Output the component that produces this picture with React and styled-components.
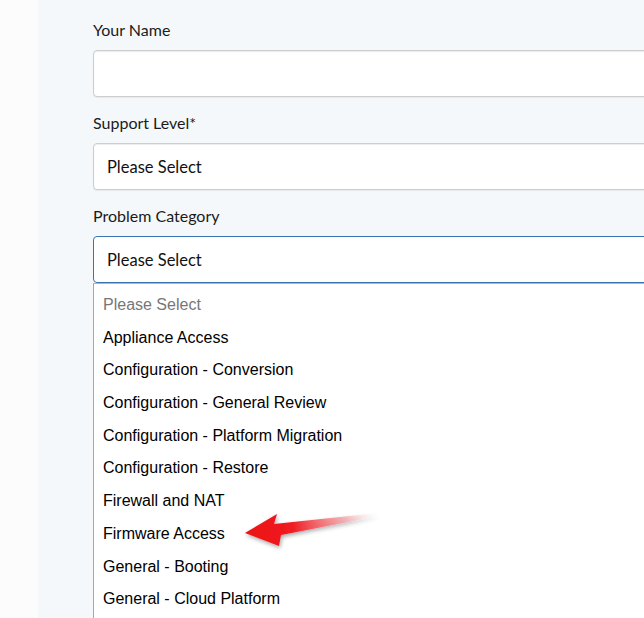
import React from 'react'
import styled, { createGlobalStyle } from 'styled-components'

const GlobalStyle = createGlobalStyle`
  html, body {
    margin: 0;
    padding: 0;
    background: #fcfcfd;
  }
  body {
    font-family: Lato, "Noto Sans", sans-serif;
    overflow: hidden;
  }
`;

const Page = styled.div`
  position: relative;
  width: 644px;
  height: 618px;
  overflow: hidden;
  display: flex;
`;

const Gutter = styled.div`
  width: 38px;
  flex: none;
  background: #fcfcfd;
`;

const Panel = styled.div`
  flex: 1;
  background: #f5f8fb;
  padding: 18px 0 0 55px;
`;

const Field = styled.div`
  display: flex;
  flex-direction: column;
  margin-bottom: 14px;
`;

const Label = styled.label`
  font-size: 16px;
  line-height: 24px;
  height: 24px;
  color: #1b1b1b;
  margin-bottom: 8px;
`;

const Box = styled.div`
  box-sizing: border-box;
  height: 47px;
  width: 600px;
  background: #fff;
  border: 1px solid ${p => (p.$focused ? '#3a73b3' : '#cdcdcd')};
  border-radius: 4px;
  box-shadow: ${p => (p.$focused ? 'none' : 'inset 0 1px 1px rgba(0,0,0,0.08), 0 1px 1px rgba(0,0,0,0.06)')};
  display: flex;
  align-items: center;
  padding-left: 13px;
  font-size: 16.5px;
  color: #111;
`;

const Dropdown = styled.ul`
  list-style: none;
  margin: -14px 0 0 0;
  padding: 5px 0 0 0;
  width: 600px;
  box-sizing: border-box;
  background: #fff;
  border-left: 1px solid #a7a7a7;
  border-top: 1px solid #b5b5b5;
  height: 400px;
`;

const Option = styled.li`
  font-family: "Liberation Sans", Arial, sans-serif;
  font-size: 16px;
  height: 32.7px;
  line-height: 32.7px;
  padding-left: 9px;
  color: ${p => (p.$placeholder ? '#777' : '#000')};
`;

const Arrow = styled.svg`
  position: absolute;
  left: 230px;
  top: 500px;
  overflow: visible;
`;

const options = [
  'Appliance Access',
  'Configuration - Conversion',
  'Configuration - General Review',
  'Configuration - Platform Migration',
  'Configuration - Restore',
  'Firewall and NAT',
  'Firmware Access',
  'General - Booting',
  'General - Cloud Platform',
];

const App = () => {
  return (
    <Page>
      <GlobalStyle />
      <Gutter />
      <Panel>
        <Field>
          <Label>Your Name</Label>
          <Box />
        </Field>
        <Field>
          <Label>Support Level*</Label>
          <Box>Please Select</Box>
        </Field>
        <Field>
          <Label>Problem Category</Label>
          <Box $focused>Please Select</Box>
        </Field>
        <Dropdown>
          <Option $placeholder>Please Select</Option>
          {options.map((o, i) => (
            <Option key={i}>{o}</Option>
          ))}
        </Dropdown>
      </Panel>
      <Arrow width="160" height="60" viewBox="0 0 160 60">
        <defs>
          <linearGradient id="shaft" x1="0" y1="0" x2="1" y2="0">
            <stop offset="0" stopColor="#ec1111" />
            <stop offset="0.35" stopColor="#f01b22" />
            <stop offset="0.75" stopColor="#f6a0a4" stopOpacity="0.7" />
            <stop offset="1" stopColor="#ffffff" stopOpacity="0" />
          </linearGradient>
          <filter id="sh" x="-20%" y="-40%" width="140%" height="180%">
            <feGaussianBlur in="SourceAlpha" stdDeviation="2" />
            <feOffset dx="1" dy="2" result="b" />
            <feComponentTransfer><feFuncA type="linear" slope="0.35" /></feComponentTransfer>
            <feMerge>
              <feMergeNode />
              <feMergeNode in="SourceGraphic" />
            </feMerge>
          </filter>
        </defs>
        <g filter="url(#sh)">
          <polygon points="15,33 47,14 44,24 148,13 150,16 51,35 49,46" fill="url(#shaft)" />
        </g>
      </Arrow>
    </Page>
  )
}

export default App
